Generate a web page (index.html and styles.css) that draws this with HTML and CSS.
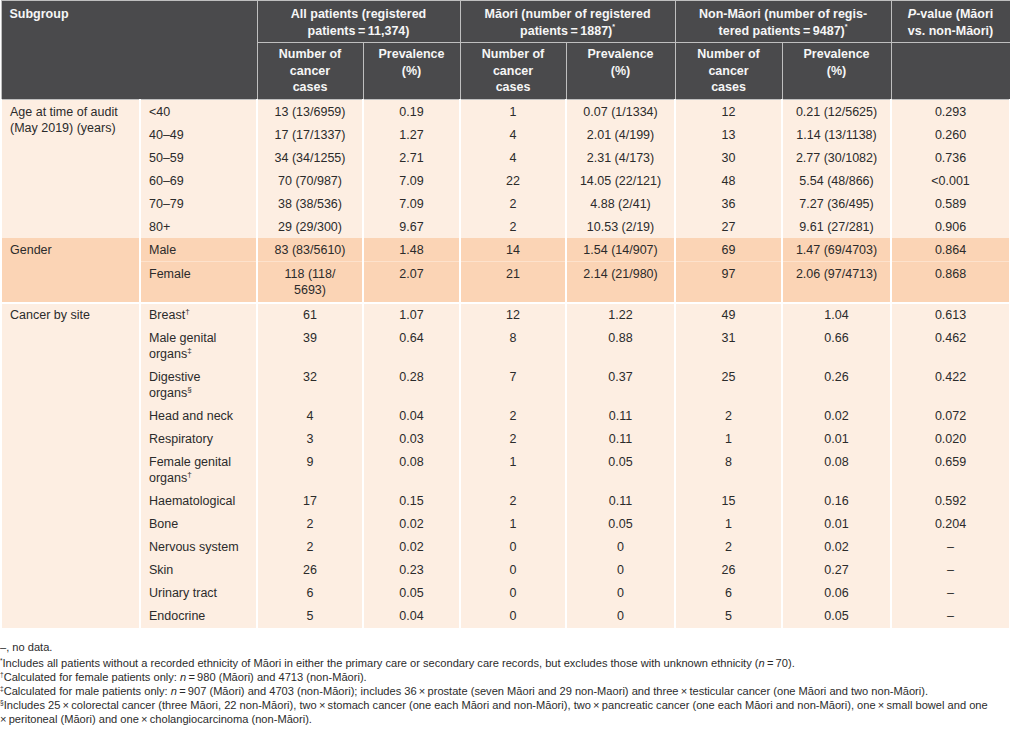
FILE: index.html
```html
<!DOCTYPE html>
<html lang="en">
<head>
<meta charset="utf-8">
<title>Cancer prevalence by subgroup</title>
<link rel="stylesheet" href="styles.css">
</head>
<body>
<table class="tbl">
  <colgroup>
    <col class="c1"><col class="c2"><col class="c3"><col class="c4"><col class="c5"><col class="c6"><col class="c7"><col class="c8"><col class="c9">
  </colgroup>
  <thead>
    <tr class="h1">
      <th class="left" colspan="2" rowspan="2">Subgroup</th>
      <th colspan="2">All patients (registered<br>patients&#8239;=&#8239;11,374)</th>
      <th colspan="2">Māori (number of registered<br>patients&#8239;=&#8239;1887)<sup>*</sup></th>
      <th colspan="2">Non-Māori (number of regis-<br>tered patients&#8239;=&#8239;9487)<sup>*</sup></th>
      <th><i>P</i>-value (Māori<br>vs. non-Māori)</th>
    </tr>
    <tr class="h2">
      <th>Number of<br>cancer<br>cases</th>
      <th>Prevalence<br>(%)</th>
      <th>Number of<br>cancer<br>cases</th>
      <th>Prevalence<br>(%)</th>
      <th>Number of<br>cancer<br>cases</th>
      <th>Prevalence<br>(%)</th>
      <th></th>
    </tr>
  </thead>
  <tbody class="light">
    <tr><td class="grp" rowspan="6">Age at time of audit (May 2019) (years)</td><td class="sub">&lt;40</td><td>13 (13/6959)</td><td>0.19</td><td>1</td><td>0.07 (1/1334)</td><td>12</td><td>0.21 (12/5625)</td><td>0.293</td></tr>
    <tr><td class="sub">40–49</td><td>17 (17/1337)</td><td>1.27</td><td>4</td><td>2.01 (4/199)</td><td>13</td><td>1.14 (13/1138)</td><td>0.260</td></tr>
    <tr><td class="sub">50–59</td><td>34 (34/1255)</td><td>2.71</td><td>4</td><td>2.31 (4/173)</td><td>30</td><td>2.77 (30/1082)</td><td>0.736</td></tr>
    <tr><td class="sub">60–69</td><td>70 (70/987)</td><td>7.09</td><td>22</td><td>14.05 (22/121)</td><td>48</td><td>5.54 (48/866)</td><td>&lt;0.001</td></tr>
    <tr><td class="sub">70–79</td><td>38 (38/536)</td><td>7.09</td><td>2</td><td>4.88 (2/41)</td><td>36</td><td>7.27 (36/495)</td><td>0.589</td></tr>
    <tr><td class="sub">80+</td><td>29 (29/300)</td><td>9.67</td><td>2</td><td>10.53 (2/19)</td><td>27</td><td>9.61 (27/281)</td><td>0.906</td></tr>
  </tbody>
  <tbody class="dark">
    <tr><td class="grp" rowspan="2">Gender</td><td class="sub">Male</td><td>83 (83/5610)</td><td>1.48</td><td>14</td><td>1.54 (14/907)</td><td>69</td><td>1.47 (69/4703)</td><td>0.864</td></tr>
    <tr class="sep"><td class="sub">Female</td><td>118 (118/<br>5693)</td><td>2.07</td><td>21</td><td>2.14 (21/980)</td><td>97</td><td>2.06 (97/4713)</td><td>0.868</td></tr>
  </tbody>
  <tbody class="light site">
    <tr><td class="grp" rowspan="12">Cancer by site</td><td class="sub">Breast<sup>†</sup></td><td>61</td><td>1.07</td><td>12</td><td>1.22</td><td>49</td><td>1.04</td><td>0.613</td></tr>
    <tr><td class="sub">Male genital<br>organs<sup>‡</sup></td><td>39</td><td>0.64</td><td>8</td><td>0.88</td><td>31</td><td>0.66</td><td>0.462</td></tr>
    <tr><td class="sub">Digestive<br>organs<sup>§</sup></td><td>32</td><td>0.28</td><td>7</td><td>0.37</td><td>25</td><td>0.26</td><td>0.422</td></tr>
    <tr><td class="sub">Head and neck</td><td>4</td><td>0.04</td><td>2</td><td>0.11</td><td>2</td><td>0.02</td><td>0.072</td></tr>
    <tr><td class="sub">Respiratory</td><td>3</td><td>0.03</td><td>2</td><td>0.11</td><td>1</td><td>0.01</td><td>0.020</td></tr>
    <tr><td class="sub">Female genital<br>organs<sup>†</sup></td><td>9</td><td>0.08</td><td>1</td><td>0.05</td><td>8</td><td>0.08</td><td>0.659</td></tr>
    <tr><td class="sub">Haematological</td><td>17</td><td>0.15</td><td>2</td><td>0.11</td><td>15</td><td>0.16</td><td>0.592</td></tr>
    <tr><td class="sub">Bone</td><td>2</td><td>0.02</td><td>1</td><td>0.05</td><td>1</td><td>0.01</td><td>0.204</td></tr>
    <tr><td class="sub">Nervous system</td><td>2</td><td>0.02</td><td>0</td><td>0</td><td>2</td><td>0.02</td><td>–</td></tr>
    <tr><td class="sub">Skin</td><td>26</td><td>0.23</td><td>0</td><td>0</td><td>26</td><td>0.27</td><td>–</td></tr>
    <tr><td class="sub">Urinary tract</td><td>6</td><td>0.05</td><td>0</td><td>0</td><td>6</td><td>0.06</td><td>–</td></tr>
    <tr><td class="sub">Endocrine</td><td>5</td><td>0.04</td><td>0</td><td>0</td><td>5</td><td>0.05</td><td>–</td></tr>
  </tbody>
</table>
<div class="notes">
  <p class="first">–, no data.</p>
  <p><sup>*</sup>Includes all patients without a recorded ethnicity of Māori in either the primary care or secondary care records, but excludes those with unknown ethnicity (<i>n</i>&#8239;=&#8239;70).</p>
  <p><sup>†</sup>Calculated for female patients only: <i>n</i>&#8239;=&#8239;980 (Māori) and 4713 (non-Māori).</p>
  <p><sup>‡</sup>Calculated for male patients only: <i>n</i>&#8239;=&#8239;907 (Māori) and 4703 (non-Māori); includes 36&#8239;×&#8239;prostate (seven Māori and 29 non-Maori) and three&#8239;×&#8239;testicular cancer (one Māori and two non-Māori).</p>
  <p><sup>§</sup>Includes 25&#8239;×&#8239;colorectal cancer (three Māori, 22 non-Māori), two&#8239;×&#8239;stomach cancer (one each Māori and non-Māori), two&#8239;×&#8239;pancreatic cancer (one each Māori and non-Māori), one&#8239;×&#8239;small bowel and one ×&#8239;peritoneal (Māori) and one&#8239;×&#8239;cholangiocarcinoma (non-Māori).</p>
</div>
</body>
</html>
```
FILE: styles.css
```css
html, body {
  margin: 0;
  padding: 0;
  background: #ffffff;
}
body {
  font-family: "Liberation Sans", Arial, sans-serif;
  color: #2b2b2b;
}
.tbl {
  width: 1009px;
  table-layout: fixed;
  border-collapse: collapse;
  font-size: 12.5px;
}
.c1 { width: 139px; }
.c2 { width: 117px; }
.c3 { width: 106px; }
.c4 { width: 97px; }
.c5 { width: 106px; }
.c6 { width: 109px; }
.c7 { width: 107px; }
.c8 { width: 109px; }
.c9 { width: 119px; }

.tbl th {
  background: #4a4a4c;
  color: #f6f6f6;
  font-weight: bold;
  text-align: center;
  vertical-align: top;
  line-height: 16.5px;
  border: 1px solid #bfbfbf;
  padding: 3px 4px 3px;
}
.tbl .h1 th { padding-top: 5px; padding-bottom: 3px; height: 33px; }
.tbl .h2 th { height: 50px; }
.tbl th.left { text-align: left; padding-left: 8px; }
.tbl th sup { font-size: 7px; line-height: 0; vertical-align: 6px; }

.tbl td {
  text-align: center;
  vertical-align: top;
  line-height: 16px;
  padding: 3.5px 4px;
  border-left: 2px solid #ffffff;
  border-right: 2px solid #ffffff;
}
.tbl td.grp { text-align: left; padding-left: 8px; }
.tbl td.sub { text-align: left; padding-left: 8px; }
.tbl td sup { font-size: 8px; line-height: 0; vertical-align: 5px; }

.light td { background: #fdeee2; }
.dark td { background: #fbd4b5; }
.dark tr.sep td { border-top: 1px solid #fde2cc; padding-bottom: 4px; }
.dark td.grp { border-top: none; }
.site tr:first-child td { border-top: 2px solid #ffffff; }

.notes {
  margin-top: 12px;
  font-size: 11.1px;
  line-height: 14px;
  color: #2b2b2b;
}
.notes p { margin: 0; }
.notes p.first { margin-bottom: 2px; }
.notes sup { font-size: 6.5px; line-height: 0; vertical-align: 4px; }
```
